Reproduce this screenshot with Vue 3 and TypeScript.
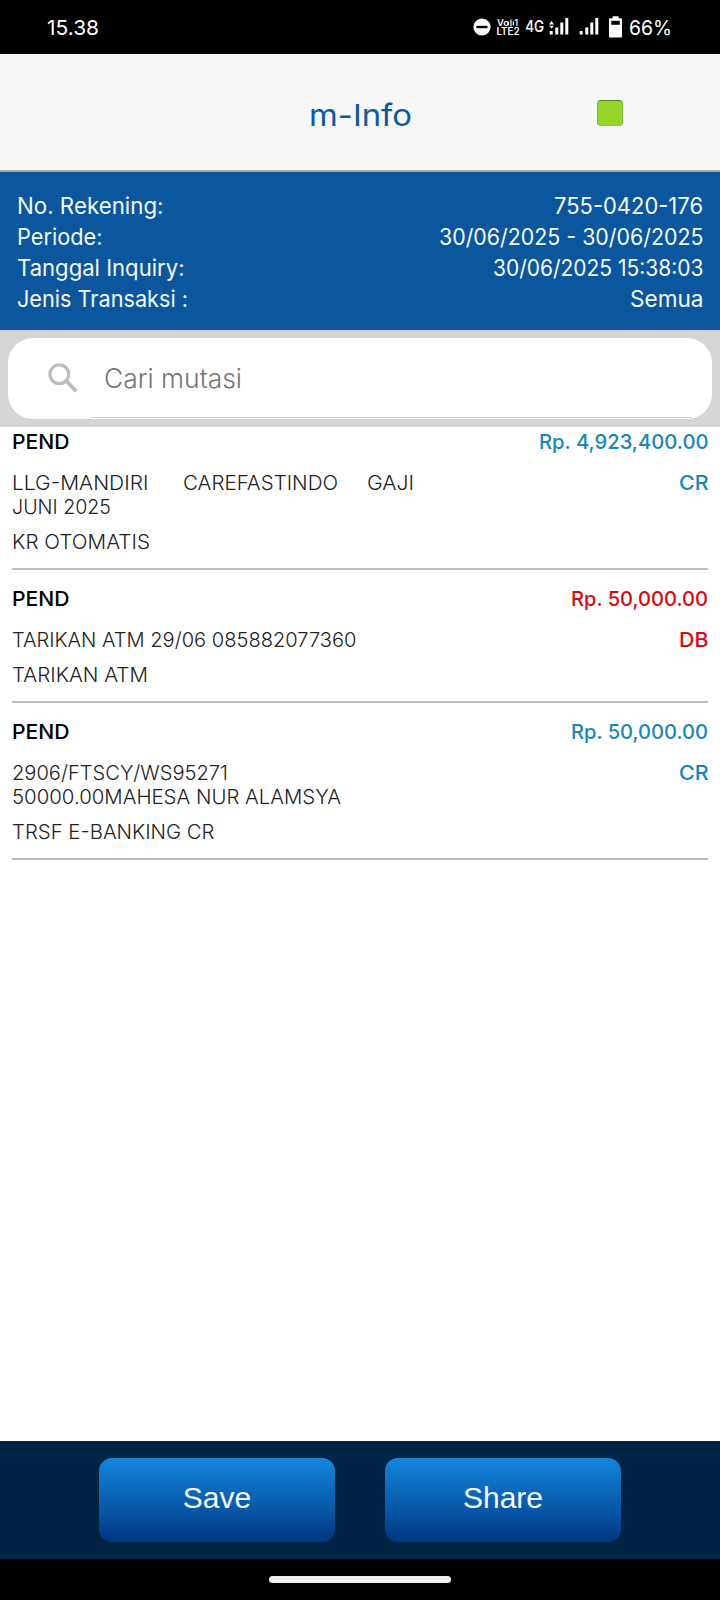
<script setup lang="ts">
import type { Directive } from 'vue'

interface Run { text: string; width: number }
interface Mutation {
  status: Run
  amount: Run
  kind: Run
  credit: boolean
  lines: Run[][]
  category: Run
}

// Stretches a label horizontally so that it occupies the requested width.
const vFit: Directive<HTMLElement, number> = {
  mounted(el, binding) {
    const natural = el.getBoundingClientRect().width
    if (!natural) return
    el.style.width = `${binding.value}px`
    el.style.transform = `scaleX(${binding.value / natural})`
  },
}

const info: { label: Run; value: Run }[] = [
  { label: { text: 'No. Rekening:', width: 146.5 }, value: { text: '755-0420-176', width: 149 } },
  { label: { text: 'Periode:', width: 85.5 }, value: { text: '30/06/2025 - 30/06/2025', width: 264.5 } },
  { label: { text: 'Tanggal Inquiry:', width: 167.5 }, value: { text: '30/06/2025 15:38:03', width: 210.5 } },
  { label: { text: 'Jenis Transaksi :', width: 171 }, value: { text: 'Semua', width: 73.5 } },
]

const mutations: Mutation[] = [
  {
    status: { text: 'PEND', width: 57.5 },
    amount: { text: 'Rp. 4,923,400.00', width: 169.5 },
    kind: { text: 'CR', width: 29.5 },
    credit: true,
    lines: [
      [
        { text: 'LLG-MANDIRI', width: 136.5 },
        { text: 'CAREFASTINDO', width: 155 },
        { text: 'GAJI', width: 47 },
      ],
      [{ text: 'JUNI 2025', width: 99 }],
    ],
    category: { text: 'KR OTOMATIS', width: 138 },
  },
  {
    status: { text: 'PEND', width: 57.5 },
    amount: { text: 'Rp. 50,000.00', width: 137 },
    kind: { text: 'DB', width: 29.5 },
    credit: false,
    lines: [[{ text: 'TARIKAN ATM 29/06 085882077360', width: 344.5 }]],
    category: { text: 'TARIKAN ATM', width: 136 },
  },
  {
    status: { text: 'PEND', width: 57.5 },
    amount: { text: 'Rp. 50,000.00', width: 137 },
    kind: { text: 'CR', width: 29.5 },
    credit: true,
    lines: [
      [{ text: '2906/FTSCY/WS95271', width: 216 }],
      [{ text: '50000.00MAHESA NUR ALAMSYA', width: 329 }],
    ],
    category: { text: 'TRSF E-BANKING CR', width: 202.5 },
  },
]
</script>

<template>
  <div class="screen">
    <div class="status-bar">
      <span v-fit="52">15.38</span>
      <div class="indicators">
        <svg class="signals" width="152" height="54" viewBox="470 0 152 54">
          <circle cx="482" cy="27" r="8.6" fill="#fff" />
          <rect x="476.5" y="25.8" width="11" height="2.4" fill="#000" />
          <g fill="#fff" font-family="Inter, sans-serif">
            <text x="497" y="26" font-size="9" font-weight="600" textLength="12" lengthAdjust="spacingAndGlyphs">Vo</text>
            <text x="514.5" y="25.5" font-size="8.5" font-weight="600">1</text>
            <text x="496.5" y="35.3" font-size="10" font-weight="600" textLength="23" lengthAdjust="spacingAndGlyphs">LTE2</text>
            <text x="525.2" y="32.2" font-size="16.5" font-weight="500" textLength="19" lengthAdjust="spacingAndGlyphs">4G</text>
          </g>
          <path d="M508.5 25.5v-4M511 26.5v-7M513.3 25.5v-4" stroke="#fff" stroke-width="1.2" fill="none" />
          <path d="M549 24.5l2.5-3.5 2.5 3.5zM549 25.8h5l-2.5 2.6z" fill="#fff" />
          <path d="M549.7 31h3v3.6h-3zM555.3 27.5h3v7.1h-3zM560.3 22.5h3v12.1h-3zM565.3 18h3v16.6h-3z" fill="#fff" />
          <path d="M579.7 31h3v3.6h-3zM585.3 27.5h3v7.1h-3zM590.3 22.5h3v12.1h-3zM595.3 18h3v16.6h-3z" fill="#fff" />
          <path d="M612.6 16.3h6v2h2.4q1 0 1 1v17.3q0 1-1 1h-11q-1 0-1-1V19.3q0-1 1-1h2.6z" fill="#fff" />
          <path d="M611.3 20.8h8.5v4h-8.5z" fill="#000" />
        </svg>
        <span v-fit="43">66%</span>
      </div>
    </div>

    <header class="title-bar">
      <h1><span v-fit="103">m-Info</span></h1>
      <i class="online"></i>
    </header>

    <section class="info">
      <div v-for="row in info" :key="row.label.text" class="info-row">
        <span v-fit="row.label.width">{{ row.label.text }}</span>
        <span v-fit="row.value.width">{{ row.value.text }}</span>
      </div>
    </section>

    <div class="search-wrap">
      <div class="search">
        <svg class="magnifier" width="32" height="32" viewBox="0 0 32 32">
          <circle cx="12.3" cy="12.2" r="9.4" fill="none" stroke="#bdbdbd" stroke-width="3.2" />
          <path d="M19.3 19.2L29.5 29.3" stroke="#bdbdbd" stroke-width="3.8" />
        </svg>
        <div class="field"><span v-fit="138">Cari mutasi</span></div>
      </div>
    </div>

    <main class="list">
      <article v-for="(m, i) in mutations" :key="i" class="mutation">
        <div class="row strong">
          <span v-fit="m.status.width">{{ m.status.text }}</span>
          <span v-fit="m.amount.width" :class="m.credit ? 'credit' : 'debit'">{{ m.amount.text }}</span>
        </div>
        <div class="row detail">
          <div>
            <div v-for="(line, j) in m.lines" :key="j" class="line">
              <span v-for="run in line" :key="run.text" v-fit="run.width">{{ run.text }}</span>
            </div>
          </div>
          <span v-fit="m.kind.width" class="kind" :class="m.credit ? 'credit' : 'debit'">{{ m.kind.text }}</span>
        </div>
        <div class="line category"><span v-fit="m.category.width">{{ m.category.text }}</span></div>
      </article>
    </main>

    <footer class="actions">
      <button type="button">Save</button>
      <button type="button">Share</button>
    </footer>
    <div class="nav"><i class="handle"></i></div>
  </div>
</template>

<style>
body { margin: 0; background: #fff; }
</style>

<style scoped>
.screen {
  width: 720px;
  height: 1600px;
  display: flex;
  flex-direction: column;
  overflow: hidden;
  background: #fff;
  font-family: Inter, "Liberation Sans", sans-serif;
}
.screen span {
  display: inline-block;
  flex: none;
  white-space: pre;
  transform-origin: 0 50%;
}
.status-bar {
  height: 54px;
  flex: none;
  display: flex;
  justify-content: space-between;
  align-items: center;
  padding: 0 48px 0 46.5px;
  box-sizing: border-box;
  background: #000;
  color: #fff;
  font-size: 20.5px;
}
.indicators { display: flex; align-items: center; gap: 7px; }
.signals { display: block; }
.title-bar {
  height: 118px;
  flex: none;
  display: flex;
  justify-content: space-between;
  align-items: center;
  padding: 0 97px 0 309px;
  box-sizing: border-box;
  border-bottom: 2px solid #a3a6a9;
  background: #f7f7f7;
}
h1 {
  margin: 6px 0 0;
  font-size: 30px;
  line-height: 36px;
  font-weight: 400;
  color: #0b5ba2;
}
.online {
  width: 26px;
  height: 26px;
  margin-top: 2px;
  box-sizing: border-box;
  border: 1px solid #83b433;
  border-top-color: #5c8520;
  border-bottom-color: #91cf30;
  border-radius: 4px;
  background: #95d62b;
}
.info {
  height: 158px;
  flex: none;
  box-sizing: border-box;
  padding: 18px 17px 0;
  background: #0c569e;
  color: #f4fbff;
  font-size: 22.5px;
  line-height: 31px;
}
.info-row { display: flex; justify-content: space-between; }
.search-wrap {
  height: 97px;
  flex: none;
  box-sizing: border-box;
  padding: 8px;
  background: #d5d5d5;
}
.search {
  height: 81px;
  display: flex;
  border-radius: 25px;
  background: #fff;
}
.magnifier { margin: 24px 0 0 39px; flex: none; }
.field {
  flex: 1;
  height: 79px;
  margin: 0 20px 0 12px;
  padding-left: 13px;
  border-bottom: 1px solid #d5d5d5;
  color: #757575;
  font-size: 26.5px;
  font-weight: 350;
  line-height: 81px;
}
.list { flex: 1; padding: 0 12px; }
.mutation {
  padding: 17px 0 14px;
  border-bottom: 2px solid #bcbcbc;
  font-size: 20.3px;
  line-height: 24px;
}
.mutation:first-child { padding-top: 3px; }
.row { display: flex; justify-content: space-between; align-items: flex-start; }
.strong { color: #000; font-weight: 500; }
.detail { margin-top: 17px; }
.line { display: flex; height: 24px; color: #222; font-weight: 350; }
.line span + span { margin-left: 34px; }
.line span + span + span { margin-left: 29.5px; }
.category { margin-top: 11px; }
.kind { font-weight: 500; }
.credit { color: #1787b5; }
.debit { color: #d40a10; }
.actions {
  height: 118px;
  flex: none;
  display: flex;
  justify-content: center;
  gap: 50px;
  padding-top: 17px;
  box-sizing: border-box;
  background: #002444;
}
button {
  width: 236px;
  height: 84px;
  margin: 0;
  padding: 0 0 4px;
  border: 0;
  border-radius: 13px;
  background: linear-gradient(#1385dc, #0958a8 60%, #00357f);
  color: #f4faff;
  font: 30px "Liberation Sans", sans-serif;
}
.nav {
  height: 41px;
  flex: none;
  display: flex;
  justify-content: center;
  padding-top: 17px;
  box-sizing: border-box;
  background: #000;
}
.handle { width: 182px; height: 7px; border-radius: 4px; background: #eee; }
</style>
